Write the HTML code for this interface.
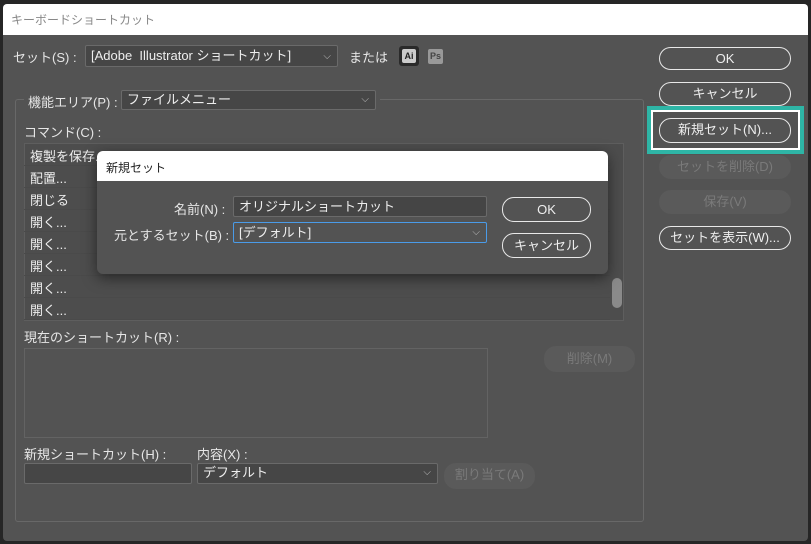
<!DOCTYPE html>
<html><head><meta charset="utf-8"><style>
*{box-sizing:border-box;margin:0;padding:0}
body{width:811px;height:544px;background:#262626;font-family:"Liberation Sans","Noto Sans CJK JP",sans-serif;font-size:13px;color:#e6e6e6;position:relative;overflow:hidden}
.a{position:absolute}
.win{left:3px;top:4px;width:805px;height:537px;background:#535353;border-radius:4px;overflow:hidden}
.tb{left:0;top:0;width:805px;height:31px;background:#fff;color:#888;font-size:12px;padding:7px 8px}
.sel{background:#464646;border:1px solid #6a6a6a;border-radius:2px;padding:0 5px;line-height:18px;color:#eee}
.chev{position:absolute;right:6px;top:0;color:#bbb;font-size:10px}
.btn{border:1.5px solid #e8e8e8;border-radius:12px;text-align:center;color:#eee;line-height:21px}
.dis{background:#5a5a5a;border-radius:12px;text-align:center;color:#7a7a7a;line-height:23px}
.row{left:24px;width:586px;height:22px;border-bottom:1px solid #4a4a4a;padding:2px 6px;color:#eee}
</style></head><body>
<div class="a win">
<div class="a tb">キーボードショートカット</div>
</div>
<div class="a" style="left:13px;top:47px">セット(S) :</div>
<div class="a sel" style="left:85px;top:45px;width:253px;height:22px;line-height:20px">[Adobe&nbsp; Illustrator ショートカット]<span class="chev" style="top:1px">⌵</span></div>
<div class="a" style="left:349px;top:47px">または</div>
<div class="a" style="left:399px;top:46px;width:20px;height:20px;background:#2a2a2a;border-radius:3px"><div class="a" style="left:3px;top:3px;width:14px;height:14px;background:#ccc;border-radius:2px;color:#222;font-size:9px;font-weight:bold;text-align:center;line-height:14px">Ai</div></div>
<div class="a" style="left:428px;top:49px;width:15px;height:15px;background:#999;border-radius:2px;color:#444;font-size:9px;font-weight:bold;text-align:center;line-height:15px">Ps</div>
<div class="a" style="left:15px;top:99px;width:629px;height:423px;border:1px solid #686868;border-radius:3px"></div>
<div class="a" style="left:24px;top:90px;width:356px;height:20px;background:#535353"></div>
<div class="a" style="left:28px;top:92px">機能エリア(P) :</div>
<div class="a sel" style="left:121px;top:90px;width:255px;height:20px">ファイルメニュー<span class="chev">⌵</span></div>
<div class="a" style="left:24px;top:122px">コマンド(C) :</div>
<div class="a" style="left:24px;top:143px;width:600px;height:178px;background:#4d4d4d;border:1px solid #5e5e5e"></div>
<div class="a row" style="top:144px">複製を保存...</div>
<div class="a row" style="top:166px">配置...</div>
<div class="a row" style="top:188px">閉じる</div>
<div class="a row" style="top:210px">開く...</div>
<div class="a row" style="top:232px">開く...</div>
<div class="a row" style="top:254px">開く...</div>
<div class="a row" style="top:276px">開く...</div>
<div class="a row" style="top:298px">開く...</div>
<div class="a" style="left:612px;top:278px;width:10px;height:30px;background:#8a8a8a;border-radius:5px"></div>
<div class="a" style="left:24px;top:327px">現在のショートカット(R) :</div>
<div class="a" style="left:24px;top:348px;width:464px;height:90px;border:1px solid #636363"></div>
<div class="a dis" style="left:544px;top:346px;width:91px;height:26px;line-height:26px">削除(M)</div>
<div class="a" style="left:24px;top:444px">新規ショートカット(H) :</div>
<div class="a" style="left:197px;top:444px">内容(X) :</div>
<div class="a sel" style="left:24px;top:463px;width:168px;height:21px"></div>
<div class="a sel" style="left:197px;top:463px;width:241px;height:21px">デフォルト<span class="chev">⌵</span></div>
<div class="a dis" style="left:444px;top:463px;width:91px;height:26px;line-height:24px">割り当て(A)</div>
<div class="a btn" style="left:659px;top:47px;width:132px;height:23px">OK</div>
<div class="a btn" style="left:659px;top:82px;width:132px;height:24px">キャンセル</div>
<div class="a" style="left:647px;top:106px;width:157px;height:48px;background:#2eb5a6;padding:4px"><div style="width:100%;height:100%;border:2px solid #fff;background:#535353"></div></div>
<div class="a btn" style="left:659px;top:118px;width:132px;height:25px;line-height:22px">新規セット(N)...</div>
<div class="a dis" style="left:659px;top:155px;width:132px;height:24px">セットを削除(D)</div>
<div class="a dis" style="left:659px;top:190px;width:132px;height:24px">保存(V)</div>
<div class="a btn" style="left:659px;top:226px;width:132px;height:24px">セットを表示(W)...</div>
<div class="a" style="left:97px;top:151px;width:511px;height:123px;background:#535353;border-radius:6px;overflow:hidden;box-shadow:0 4px 14px rgba(0,0,0,.5)">
<div class="a" style="left:0;top:0;width:511px;height:30px;background:#fff;color:#222;font-size:12px;padding:8px 9px">新規セット</div>
</div>
<div class="a" style="left:174px;top:199px">名前(N) :</div>
<div class="a sel" style="left:233px;top:196px;width:254px;height:21px;line-height:19px;background:#454545">オリジナルショートカット</div>
<div class="a" style="left:114px;top:225px">元とするセット(B) :</div>
<div class="a sel" style="left:233px;top:222px;width:254px;height:21px;line-height:19px;border-color:#4a9be8;background:#535353">[デフォルト]<span class="chev">⌵</span></div>
<div class="a btn" style="left:502px;top:197px;width:89px;height:25px;line-height:23px">OK</div>
<div class="a btn" style="left:502px;top:233px;width:89px;height:25px;line-height:23px">キャンセル</div>
</body></html>
